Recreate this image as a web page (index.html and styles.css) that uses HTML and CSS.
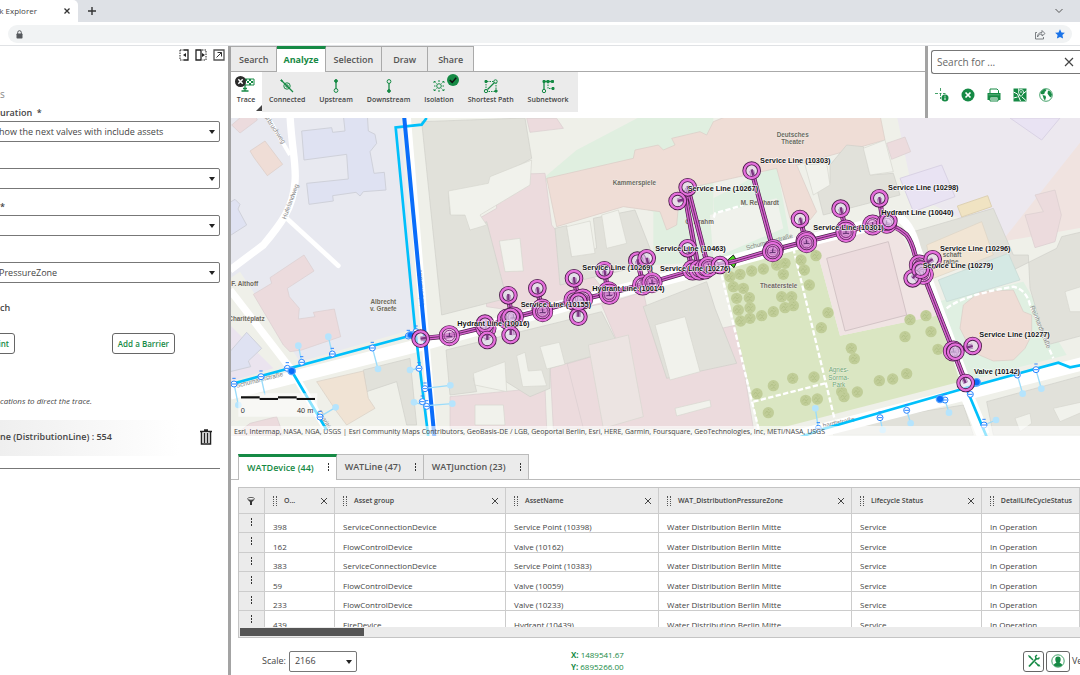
FILE: index.html
```html
<!DOCTYPE html>
<html lang="en">

<head>
    <meta charset="UTF-8">
    <meta name="viewport" content="width=device-width, initial-scale=1.0">
    <title>Network Explorer</title>
    <link rel="stylesheet" href="styles.css">
</head>

<body>
    <!-- Browser chrome -->
    <div class="tab-strip">
        <div class="browser-tab">
            <span>rk Explorer</span>
            <button class="plain" aria-label="Close tab"><svg width="8" height="8" viewBox="0 0 8 8"><path d="M1.500 1.500l5 5M6.500 1.500l-5 5" stroke="#333" stroke-width="1.300"/></svg></button>
        </div>
        <button class="plain new-tab" aria-label="New tab"><svg width="10" height="10" viewBox="0 0 10 10"><path d="M5 1v8M1 5h8" stroke="#333" stroke-width="1.400"/></svg></button>
        <button class="plain tab-list" aria-label="Tab list"><svg width="10" height="6" viewBox="0 0 10 6"><path d="M1.500 1l3.500 3.500L8.500 1" fill="none" stroke="#555"/></svg></button>
    </div>
    <div class="address-row">
        <div class="address-bar">
            <svg width="7" height="9" viewBox="0 0 7 9"><path d="M1.700 4V2.500a1.800 1.800 0 0 1 3.600 0V4" fill="none" stroke="#55585c"/><rect x=".5" y="3.500" width="6" height="5" rx=".7" fill="#55585c"/></svg>
            <svg class="share" width="12" height="11" viewBox="0 0 12 11"><path d="M3 3.500H1.500v6.500h8V8M3.500 8c0-3 1.500-4.500 4.500-4.500V1.500L11 4.500 8 7V5C6 5 4.500 6 3.500 8z" fill="none" stroke="#5f6368" stroke-width=".8"/></svg>
            <svg width="10" height="10" viewBox="0 0 10 10"><path d="M5 .3l1.500 3.100 3.400.4-2.500 2.300.7 3.500L5 7.900 1.900 9.600l.7-3.500L.1 3.800l3.400-.4z" fill="#1a73e8"/></svg>
        </div>
    </div>

    <div class="app">
        <aside class="trace-panel">
            <div class="panel-tools">
                <button class="plain" aria-label="Dock left"><svg width="10" height="12" viewBox="0 0 10 12"><path d="M1 1v10M1 1h5M1 11h5" stroke="#222" stroke-dasharray="1.500 1" fill="none"/><path d="M5 1h4v10H5" fill="none" stroke="#222" stroke-width="1.300"/><path d="M7 4v4L4 6z" fill="#222"/></svg></button>
                <button class="plain" aria-label="Dock right"><svg width="12" height="12" viewBox="0 0 12 12"><path d="M1 1h5v10H1z" fill="none" stroke="#222" stroke-width="1.300"/><path d="M7 1h4v10H7" fill="none" stroke="#222" stroke-dasharray="1.500 1"/><path d="M7 4v4l3-2z" fill="#222"/></svg></button>
                <button class="plain" aria-label="Undock"><svg width="12" height="12" viewBox="0 0 12 12"><path d="M1 1h10v10H1z" fill="none" stroke="#555" stroke-width="1.300"/><path d="M3.500 8.500L8.500 3.500M4.500 3.500h4v4" fill="none" stroke="#333"/></svg></button>
            </div>
            <div class="trace-form">
                <h2>s</h2>
                <label for="configuration">uration &nbsp;*</label>
                <div class="select">
                    <select id="configuration"><option>how the next valves with include assets</option></select>
                </div>
                <label for="domain">&nbsp;</label>
                <div class="select">
                    <select id="domain"><option></option></select>
                </div>
                <label for="tier">*</label>
                <div class="select">
                    <select id="tier"><option></option></select>
                </div>
                <label for="zone">&nbsp;</label>
                <div class="select">
                    <select id="zone"><option>PressureZone</option></select>
                </div>
                <h3>ch</h3>
                <div class="point-buttons">
                    <button class="btn">int</button>
                    <button class="btn">Add a Barrier</button>
                </div>
                <p class="hint">cations to direct the trace.</p>
                <div class="start-point">
                    <strong>ne (DistributionLine) : 554</strong>
                    <button class="plain" aria-label="Delete"><svg width="12" height="16" viewBox="0 0 12 16"><path d="M0 2.500h12M4 1h4" stroke="#222" stroke-width="1.600"/><path d="M1.500 3v12h9V3M4.500 4v10M7.500 4v10" fill="none" stroke="#222" stroke-width="1.500"/></svg></button>
                </div>
            </div>
        </aside>

        <main>
            <div class="top-area">
                <div class="ribbon">
                    <nav class="ribbon-tabs">
                        <a href="#search">Search</a>
                        <a href="#analyze" class="active">Analyze</a>
                        <a href="#selection">Selection</a>
                        <a href="#draw">Draw</a>
                        <a href="#share">Share</a>
                    </nav>
                    <div class="tools">
                        <button class="tool current">
                            <svg width="22" height="16" viewBox="0 0 22 16"><path d="M10 5v10M6.500 15h7M8 12.500h4" stroke="#168a45" stroke-width="1.300"/><path d="M10 3h9v6h-9z" fill="#fff" stroke="#168a45"/><path d="M10 3h2v2h-2zM14 3h2v2h-2zM12 5h2v2h-2zM16 5h2v2h-2zM14 7h2v2h-2z" fill="#168a45"/><circle cx="5.500" cy="5.500" r="5.500" fill="#2b2b2b"/><path d="M3.300 3.300l4.400 4.400M7.700 3.300L3.300 7.700" stroke="#fff" stroke-width="1.500"/></svg>
                            Trace
                        </button>
                        <button class="tool">
                            <svg width="16" height="16" viewBox="0 0 16 16" fill="none" stroke="#168a45"><path d="M2 2l12 12" stroke-width="1.200"/><circle cx="8" cy="8" r="3.200"/><circle cx="8" cy="8" r="1.200"/><circle cx="2.500" cy="2.500" r=".7"/></svg>
                            Connected
                        </button>
                        <button class="tool">
                            <svg width="16" height="16" viewBox="0 0 16 16" fill="none" stroke="#168a45"><path d="M8 3v8" stroke-width="1.300"/><circle cx="8" cy="3" r="1.400" fill="#168a45"/><circle cx="8" cy="12.500" r="1.900"/></svg>
                            Upstream
                        </button>
                        <button class="tool">
                            <svg width="16" height="16" viewBox="0 0 16 16" fill="none" stroke="#168a45"><path d="M8 5v8" stroke-width="1.300"/><circle cx="8" cy="13" r="1.400" fill="#168a45"/><circle cx="8" cy="3.500" r="1.900"/></svg>
                            Downstream
                        </button>
                        <button class="tool">
                            <svg width="16" height="16" viewBox="0 0 16 16" fill="none" stroke="#168a45"><circle cx="8" cy="8" r="2.300"/><path d="M8 2v2M8 12v2M3 8h1.500M11.500 8H13M3 5V3.500h1.500M11.500 3.500H13V5M3 11v1.500h1.500M11.500 12.500H13V11M4.500 4.500l1 1M11.500 4.500l-1 1M4.500 11.500l1-1M11.500 11.500l-1-1"/></svg>
                            Isolation
                            <svg class="done" width="12" height="12" viewBox="0 0 12 12"><circle cx="6" cy="6" r="6" fill="#168a45"/><path d="M2.800 6l2.400 2.400 4-4.600" fill="none" stroke="#111" stroke-width="1.500"/></svg>
                        </button>
                        <button class="tool">
                            <svg width="16" height="16" viewBox="0 0 16 16" fill="none" stroke="#168a45"><path d="M3 12.500v-9h8.500M13 4.500v9H5" stroke-dasharray="1.500 1"/><path d="M4.500 11.500l7-7" stroke-width="1.200"/><circle cx="3" cy="13" r="1.700"/><circle cx="12.500" cy="3.500" r="1.700"/><path d="M2 2.500h2v2H2zM12 12h2v2h-2z" fill="#168a45"/></svg>
                            Shortest Path
                        </button>
                        <button class="tool">
                            <svg width="16" height="16" viewBox="0 0 16 16" fill="none" stroke="#168a45"><path d="M4 11.500V3.500h8" stroke-width="1.300"/><path d="M8 4v6.500h5" stroke-dasharray="1.500 1"/><circle cx="4" cy="13" r="1.700"/><path d="M3 2.500h2v2H3zM11.500 2.500h2v2h-2zM12 9.500h2v2h-2zM7 2.500h2v2H7z" fill="#168a45"/></svg>
                            Subnetwork
                        </button>
                    </div>
                </div>
                <div class="search-panel">
                    <div class="search-box">
                        <input type="text" aria-label="Search" placeholder="Search for ...">
                        <button class="plain" aria-label="Clear search"><svg width="10" height="10" viewBox="0 0 10 10"><path d="M1 1l8 8M9 1L1 9" stroke="#444" stroke-width="1.200"/></svg></button>
                    </div>
                    <div class="quick-tools">
                        <button class="plain" aria-label="Identify"><svg width="14" height="14" viewBox="0 0 14 14"><path d="M5.500 0v3M5.500 5v3M5.500 9v2M0 5.500h3M4.500 5.500h2M8 5.500h2.500" stroke="#168a45" stroke-width=".8"/><circle cx="10" cy="10" r="3.500" fill="#168a45"/><path d="M10 9.500v2.500M10 7.700v1" stroke="#fff"/></svg></button>
                        <button class="plain" aria-label="Clear"><svg width="14" height="14" viewBox="0 0 14 14"><circle cx="7" cy="7" r="6.500" fill="#168a45"/><path d="M4.500 4.500l5 5M9.500 4.500l-5 5" stroke="#fff" stroke-width="1.700"/></svg></button>
                        <button class="plain" aria-label="Print"><svg width="14" height="14" viewBox="0 0 14 14"><path d="M3 5V1h7l1.500 1.500V5" fill="#fff" stroke="#168a45"/><path d="M.5 5h13v7h-13z" fill="#168a45"/><path d="M3 9h8v4H3z" fill="#fff" stroke="#168a45"/><path d="M4 11h6M2 7h10" stroke="#168a45"/><path d="M1.500 6.800h11" stroke="#8fc9a6" stroke-width=".6"/></svg></button>
                        <button class="plain" aria-label="Map export"><svg width="14" height="14" viewBox="0 0 14 14"><path d="M.5.500h13v13H.5z" fill="#168a45"/><path d="M.5 4l4 2 3 7M.5 10l4-1M5.500.5L7 8l6.500-5M9 9l4.500 4" fill="none" stroke="#fff"/><path d="M8 1.500a2.500 2.500 0 0 1 2.500 2.500C10.500 6 8 8.500 8 8.500S5.500 6 5.500 4A2.500 2.500 0 0 1 8 1.500z" fill="#168a45" stroke="#fff" stroke-width=".8"/><circle cx="8" cy="4" r=".8" fill="#fff"/></svg></button>
                        <button class="plain" aria-label="Basemap"><svg width="14" height="14" viewBox="0 0 14 14"><circle cx="7" cy="7" r="6.300" fill="#fff" stroke="#168a45" stroke-width=".8"/><path d="M1.500 4L5 1l2.500.5L7 3 5.500 4l.5 1L4 6.500 2 6zM3.500 7l3 .8.5 1.700L6 12.500 4.800 11zM9 2.500l2.500 1L13 6.500l-1 3L10.500 8.500 9.500 7 8.500 5.500z" fill="#168a45"/></svg></button>
                    </div>
                </div>
            </div>

            <div class="map">
                <svg class="map-canvas" viewBox="3 9 2547 954" preserveAspectRatio="xMinYMin slice">
                    <defs>
                        <g id="node">
                            <circle r="22" fill="#e3dcf2" fill-opacity=".6" stroke="#4b1b4a" stroke-width="12"/>
                            <circle r="22" fill="none" stroke="#e56fdc" stroke-width="7"/>
                        </g>
                        <g id="double">
                            <circle r="26" fill="#e29be0" fill-opacity=".6" stroke="#4b1b4a" stroke-width="11"/>
                            <circle r="26" fill="none" stroke="#e56fdc" stroke-width="7"/>
                            <circle r="16" fill="none" stroke="#8a3388" stroke-width="3"/>
                            <path d="M-9 3h18M0 3v-12" stroke="#5a2a6a" stroke-width="3"/>
                        </g>
                        <g id="valve">
                            <circle r="9" fill="#fff" stroke="#2c86ff" stroke-width="3"/>
                            <path d="M-7 0H7M-5 -17H5" stroke="#2c86ff" stroke-width="3"/>
                        </g>
                        <g id="tree">
                            <circle r="17" fill="#c0cd98"/>
                            <path d="M-10 3l6-8 5 7 7-6M-6 9l8-4 5 5M-2 -11l5 3" fill="none" stroke="#aebc82" stroke-width="2"/>
                        </g>
                        <circle id="hydrant" r="10" fill="#b5e4fd"/>
                    </defs>

                    <!-- ground -->
                    <path fill="#eff0e9" d="M0 0h2600v1000H0z"/>
                    <path fill="#e8e9f0" d="M0 0H510L560 640 210 740 30 470 0 490z"/>
                    <path fill="#ebe4ef" d="M0 630L130 760 0 800z"/>
                    <path fill="#ece8ef" d="M1000 0H2600V60L2330 380 2050 240 2000 0z"/>
                    <path fill="#f0e3e0" d="M2600 20L2315 380 2600 330z"/>
                    <path fill="#e0efe0" d="M940 190L1040 105 1240 0H1450V440L1270 450 1270 290 950 200z"/>
                    <path fill="#dff0e1" d="M1450 250L1640 150 1680 370 1460 440z"/>
                    <path fill="#f0f2ec" d="M1440 300L1640 250 1660 340 1450 430z"/>
                    <path fill="#e0f0e2" d="M2120 560L2380 500 2510 720 2200 800z"/>

                    <!-- buildings -->
                    <g fill="#dfe2f2" stroke="#cfd1da" stroke-width="3">
                        <path d="M215 48L305 38 308 52 345 48 340 0H412L415 48 435 58 440 85 420 110 432 175 463 172 468 225 400 230 390 243 378 232 308 242 310 258 237 268 230 205 355 192 350 118 222 135z"/>
                        <path d="M0 262L15 253 30 268 24 282 50 330 0 362zM0 710L50 652 95 700 55 738 62 755 0 770z"/>
                    </g>
                    <g fill="#ecdbdd" stroke="#d9cdce" stroke-width="2">
                        <path d="M5 30L40 0H75L82 15 30 54zM70 538L125 505 120 488 222 420 252 468 172 520 178 545 208 580 205 612 255 605 250 592 313 582 332 665 215 705 180 710 160 690z"/>
                        <path d="M890 10H980L1000 40 900 52z"/>
                        <path d="M748 310L800 280 795 180 945 175 965 330 1150 560 940 600 770 575z"/>
                        <path d="M1115 570L1240 530 1260 620 1290 680 1520 630 1570 940H1010L1000 750 1170 700z"/>
                        <path d="M660 845L945 818 950 940H660zM960 750L1010 740 1060 940H970zM2 970L60 925 140 905 160 960z"/>
                        <path d="M1970 85L2025 66 2042 110 1985 133zM2385 300L2440 290 2415 240 2475 225 2494 300 2475 380 2415 398z"/>
                    </g>
                    <g fill="#efddd6" stroke="#dacbc5" stroke-width="2">
                        <path d="M950 190L1210 130 1215 105 1285 90 1300 105 1335 90 1325 70 1410 50 1430 60 1450 20 1500 0H1950L1965 75 1700 150 1760 290 1740 315 1680 310 1640 160 1350 225 1340 330 1310 345 1290 290 1180 275 980 335z"/>
                        <path d="M2200 570L2250 530 2350 525 2380 590 2405 600 2405 660 2385 700 2350 735 2290 738 2225 710 2190 640z"/>
                        <path d="M60 108L105 78 158 148 112 182 72 128z"/>
                    </g>
                    <g fill="#e1e1da" stroke="#cfcfc8" stroke-width="2">
                        <path d="M575 20L885 9 905 130 780 200 755 218 655 232 660 298 710 300 720 345 770 320 830 550 635 600z"/>
                        <path d="M975 340L1010 332 1025 425 1100 400 1090 310 1215 285 1260 400 1250 450 990 510z"/>
                        <path d="M648 705L1115 590 1170 700 1010 745 960 760 960 820 900 845 780 770 730 790 740 830 660 840z"/>
                        <path d="M1240 575L1430 500 1455 580 1520 745 1310 790z"/>
                        <path d="M400 765L540 730 560 930H530L500 800 410 830z"/>
                        <path d="M1760 220L1800 205 1800 150 1850 90 1900 95 1920 180 1990 175 2010 240 1780 300z"/>
                        <path d="M2050 350L2290 280 2350 420 2395 420 2400 520 2450 690 2600 650V340L2495 365 2480 400 2320 480 2060 440z"/>
                        <path d="M1820 930L2200 870 2230 960H1810zM2270 860L2600 770V960H2290z"/>
                    </g>
                    <g fill="#f1f2ec" stroke="#d6d6cf" stroke-width="2">
                        <path d="M655 228L775 205 780 185 905 135 900 210 750 300 770 330 720 345 705 300 662 300z"/>
                        <path d="M808 378L870 370 880 468 825 470zM1010 335L1080 318 1095 415 1025 425zM1115 300L1165 285 1190 385 1130 400z"/>
                        <path d="M1275 630L1365 605 1410 770 1320 795zM730 775L825 740 830 830 735 810zM860 722L885 712 895 768 935 765 950 812 878 815zM930 695L988 682 1005 748 950 762zM735 870H820L825 930H735zM1335 880L1440 855 1443 875 1340 903z"/>
                        <path d="M1075 690L1195 660 1240 905 1120 940z" fill="#ece4e2"/>
                        <path d="M2505 530L2600 500V590L2520 590zM2470 880L2560 860V890L2490 920zM2355 910L2400 895 2405 925 2370 950z"/>
                        <path d="M1725 150L1790 145 1800 210 1750 240zM1900 100L1965 75 1990 170 1920 180z"/>
                    </g>
                    <path fill="#f0e3d4" stroke="#d8cfc4" stroke-width="2" d="M260 800L400 768 415 850 435 880 350 930 320 890z"/>
                    <path fill="#e9e3f3" stroke="#d9d2e4" stroke-width="3" d="M2010 190L2135 150 2175 245 2050 290zM2340 9L2435 75 2490 9z"/>
                    <path fill="#f0e3c2" stroke="#ddd1b3" stroke-width="3" d="M2182 273L2273 242 2285 275 2195 306z"/>
                    <path fill="#f1e5d4" stroke="#ddd3c4" stroke-width="2" d="M2090 390L2255 320 2290 420 2110 490z"/>
                    <path fill="#d5e9e4" stroke="#c6d8d3" stroke-width="2" d="M2125 495L2335 415 2370 495 2150 560z"/>

                    <!-- park -->
                    <path fill="#dae6c2" d="M1475 460L1755 385 1830 662 2125 600 2190 800 1590 955z"/>
                    <path fill="#f0e4e3" d="M1755 385L2000 325 2130 600 1830 662z"/>
                    <path fill="#ecdbdd" stroke="#d3c4c6" stroke-width="3" d="M1790 430L1975 380 2030 600 1845 648z"/>

                    <!-- streets -->
                    <g fill="none" stroke="#fff">
                        <path stroke-width="22" d="M180 0C185 100 200 150 195 200 190 280 150 330 100 390L0 465M0 525L185 765 300 960"/>
                        <path stroke-width="14" d="M165 305L325 452" stroke-linecap="round"/>
                        <path stroke-width="12" d="M110 0L180 120"/>
                        <path stroke-width="38" d="M0 835L600 682 1010 570 1370 475 1740 375 2000 310"/>
                        <path stroke-width="26" d="M2000 305Q2040 320 2060 400L2220 830"/>
                        <path stroke-width="40" d="M1600 990L2210 835 2600 735M2210 840L2260 960"/>
                        <path stroke-width="24" d="M530 0L610 960"/>
                        <path stroke-width="7" stroke-dasharray="16 7" d="M1475 480L1590 960M1690 400L1818 930M1570 860L1785 805M1445 330L1455 295 1540 270M2150 580Q2200 540 2350 515 2390 525 2400 570L2470 730"/>
                    </g>

                    <g id="trees"></g>

                    <!-- basemap labels -->
                    <g class="place">
                        <text x="4" y="512">F. Althoff</text>
                        <text x="-5" y="617">Charitéplatz</text>
                        <text x="460" y="567" text-anchor="middle">Albrecht</text>
                        <text x="460" y="589" text-anchor="middle">v. Graefe</text>
                        <text x="1148" y="210">Kammerspiele</text>
                        <text x="1688" y="65" text-anchor="middle">Deutsches</text>
                        <text x="1688" y="87" text-anchor="middle">Theater</text>
                        <text x="1532" y="270">M. Reinhardt</text>
                        <text x="1366" y="327">O. Brahm</text>
                        <text x="1590" y="518">Theaterstele</text>
                        <text x="2138" y="427">schaft</text>
                        <text x="2140" y="447">raine</text>
                        <g class="park-name">
                            <text x="1826" y="772" text-anchor="middle">Agnes-</text>
                            <text x="1826" y="794" text-anchor="middle">Sorma-</text>
                            <text x="1826" y="816" text-anchor="middle">Park</text>
                        </g>
                    </g>
                    <g class="street">
                        <text transform="translate(102 5) rotate(56)">orbruchweg</text>
                        <text transform="translate(168 314) rotate(-70)">Hufelandweg</text>
                        <text transform="translate(20 818) rotate(-14)">Schumannstraße</text>
                        <text transform="translate(1550 405) rotate(-15)">Schumannstraße</text>
                        <text transform="translate(582 572) rotate(-94)">Luisenstraße</text>
                        <text transform="translate(2400 575) rotate(68)">Reinhardtstraße</text>
                        <text transform="translate(1780 938) rotate(-12)">hardtstraße</text>
                        <text transform="translate(262 890) rotate(60)">Charité</text>
                    </g>

                    <!-- water network -->
                    <g fill="none" stroke="#00c0fb" stroke-width="8">
                        <path d="M590 9L575 29 497 37 555 640 596 975M0 808L540 662M185 768L290 945"/>
                        <path d="M1700 970L1780 942 2210 818 2485 743 2520 757 2600 742M2207 815L2272 970"/>
                    </g>
                    <path d="M522 0L614 975" stroke="#0a6dfa" stroke-width="12"/>
                    <g fill="none" stroke="#9adcfb" stroke-width="4">
                        <path d="M205 690L215 740M295 665L307 717M427 698L444 762M540 765L568 760M585 820L661 811M552 862L590 872 667 866M93 786L105 840M270 905L317 877M12 806L25 870"/>
                        <path d="M1756 880L1765 940M1950 908L1958 945M2030 885L2042 925M2145 855L2157 893M2362 780L2378 836M2418 765L2434 821M2263 930L2298 915"/>
                    </g>
                    <g id="hydrants"></g>
                    <g id="valves"></g>
                    <g fill="#0a6dfa" stroke="#58a5ff" stroke-width="4"><circle cx="185" cy="768" r="11"/><circle cx="542" cy="660" r="10"/><circle cx="2130" cy="852" r="11"/><circle cx="2240" cy="802" r="11"/></g>

                    <!-- trace result -->
                    <path d="M1490 438L1510 420 1521 438 1512 458z" fill="#4bdc1f" stroke="#222" stroke-width="3"/>
                    <g class="trace trace-casing"><path id="route" d="M572 671L658 662 765 636 840 610 938 585 1045 555 1135 535 1255 505 1410 460 1510 440 1630 405 1728 380 1848 350 1940 325Q1990 325 2030 360 2045 380 2055 420L2080 478 2170 708 2207 804M835 541L845 610 852 660M765 630L772 675M922 520L935 585M1032 490L1045 555V605M1123 466L1135 535M1222 437L1240 510 1270 502 1250 430M1373 400L1385 460M1373 217L1435 460M1343 258L1373 245M1362 225L1405 460M1565 167L1630 405M1710 312L1728 380M1832 281L1848 350M1948 250L1960 325M2108 433L2070 460 2048 490M2228 693L2170 708"/></g>
                    <use href="#route" class="trace trace-line"/>
                    <use href="#route" class="trace trace-core"/>
                    <g id="junctions"></g>
                    <g id="endpoints"></g>
                    <!-- service stubs inside the end nodes -->
                    <path class="stubs" d="M835 537V556M842 660V642M772 675V657M922 516L925 536M1032 486L1034 506M1045 605V588M1123 462L1126 482M1222 433L1226 452M1250 428L1254 446M1373 396L1377 415M1373 213L1378 233M1343 258L1362 253M1565 163L1570 182M1710 308L1715 327M1832 277L1836 296M1948 246L1951 266M2108 433L2090 443M2048 490L2060 476M2228 693L2210 698M2207 804L2200 788M572 671L590 669"/>
                    <g class="asset">
                        <text x="682" y="632">Hydrant Line (10016)</text>
                        <text x="872" y="577">Service Line (10155)</text>
                        <text x="1087" y="527">Hydrant Line (10014)</text>
                        <text x="1057" y="465">Service Line (10269)</text>
                        <text x="1276" y="409">Service Line (10463)</text>
                        <text x="1290" y="467">Service Line (10276)</text>
                        <text x="1373" y="228">Service Line (10267)</text>
                        <text x="1590" y="143">Service Line (10303)</text>
                        <text x="1750" y="346">Service Line (10301)</text>
                        <text x="1974" y="226">Service Line (10298)</text>
                        <text x="1954" y="299">Hydrant Line (10040)</text>
                        <text x="2130" y="409">Service Line (10296)</text>
                        <text x="2078" y="460">Service Line (10279)</text>
                        <text x="2248" y="666">Service Line (10277)</text>
                        <text x="2232" y="776">Valve (10142)</text>
                    </g>

                    <!-- scale bar -->
                    <path d="M25 835H262V905H25z" fill="#fff" fill-opacity=".55"/>
                    <path d="M33 850H255" stroke="#888" stroke-width="2"/>
                    <path d="M33 847H89M144 847H200M89 852H144M200 852H255" stroke="#111" stroke-width="6"/>
                    <g class="scale-text"><text x="32" y="893">0</text><text x="201" y="893">40 m</text></g>
                </svg>
                <div class="attribution">Esri, Intermap, NASA, NGA, USGS | Esri Community Maps Contributors, GeoBasis-DE / LGB, Geoportal Berlin, Esri, HERE, Garmin, Foursquare, GeoTechnologies, Inc, METI/NASA, USGS</div>
            </div>

            <section class="results">
                <nav class="result-tabs">
                    <a href="#device" class="active">WATDevice (44)<i class="dots"></i></a>
                    <a href="#line">WATLine (47)<i class="dots"></i></a>
                    <a href="#junction">WATJunction (23)<i class="dots"></i></a>
                </nav>
                <div class="grid">
                    <table>
                        <colgroup><col class="c-menu"><col class="c-id"><col class="c-group"><col class="c-name"><col class="c-zone"><col class="c-status"><col class="c-detail"></colgroup>
                        <thead>
                            <tr>
                                <th><svg width="8" height="8" viewBox="0 0 8 8"><ellipse cx="4" cy="1.800" rx="3.500" ry="1.300" fill="#fff" stroke="#333" stroke-width=".8"/><path d="M.6 2.500L3 5v3h2V5l2.400-2.500C6 3.500 2 3.500.6 2.500z" fill="#333"/></svg></th>
                                <th><div class="head"><i class="grip"></i>O...<button class="plain remove" aria-label="Remove column"></button></div></th>
                                <th><div class="head"><i class="grip"></i>Asset group<button class="plain remove" aria-label="Remove column"></button></div></th>
                                <th><div class="head"><i class="grip"></i>AssetName<button class="plain remove" aria-label="Remove column"></button></div></th>
                                <th><div class="head"><i class="grip"></i>WAT_DistributionPressureZone<button class="plain remove" aria-label="Remove column"></button></div></th>
                                <th><div class="head"><i class="grip"></i>Lifecycle Status<button class="plain remove" aria-label="Remove column"></button></div></th>
                                <th><div class="head"><i class="grip"></i>DetailLifeCycleStatus</div></th>
                            </tr>
                        </thead>
                        <tbody>
                            <tr><td><i class="dots"></i></td><td>398</td><td>ServiceConnectionDevice</td><td>Service Point (10398)</td><td>Water Distribution Berlin Mitte</td><td>Service</td><td>In Operation</td></tr>
                            <tr><td><i class="dots"></i></td><td>162</td><td>FlowControlDevice</td><td>Valve (10162)</td><td>Water Distribution Berlin Mitte</td><td>Service</td><td>In Operation</td></tr>
                            <tr><td><i class="dots"></i></td><td>383</td><td>ServiceConnectionDevice</td><td>Service Point (10383)</td><td>Water Distribution Berlin Mitte</td><td>Service</td><td>In Operation</td></tr>
                            <tr><td><i class="dots"></i></td><td>59</td><td>FlowControlDevice</td><td>Valve (10059)</td><td>Water Distribution Berlin Mitte</td><td>Service</td><td>In Operation</td></tr>
                            <tr><td><i class="dots"></i></td><td>233</td><td>FlowControlDevice</td><td>Valve (10233)</td><td>Water Distribution Berlin Mitte</td><td>Service</td><td>In Operation</td></tr>
                            <tr><td><i class="dots"></i></td><td>439</td><td>FireDevice</td><td>Hydrant (10439)</td><td>Water Distribution Berlin Mitte</td><td>Service</td><td>In Operation</td></tr>
                        </tbody>
                    </table>
                </div>
                <div class="scrollbar"><div class="thumb"></div></div>
            </section>

            <footer>
                <label for="scale">Scale:</label>
                <div class="select scale-select">
                    <select id="scale"><option>2166</option></select>
                </div>
                <div class="coords">
                    <div><b>X:</b> 1489541.67</div>
                    <div><b>Y:</b> 6895266.00</div>
                </div>
                <div class="footer-tools">
                    <button class="btn" aria-label="Tools"><svg width="14" height="14" viewBox="0 0 14 14"><path d="M3 3l3 3M8 8l4 4" stroke="#168a45" stroke-width="1.500"/><path d="M2 12.500l7.500-8" stroke="#168a45" stroke-width="1.800"/><path d="M12.500 3.500l-1.500 1.500-2-.5-.5-2L10 1" fill="none" stroke="#168a45" stroke-width="1.400"/><path d="M1 1l2.500 1 .5 2-2-.5zM10 12l2-2 1.500 2.500z" fill="#168a45"/></svg></button>
                    <button class="btn user" aria-label="User"><svg width="14" height="14" viewBox="0 0 14 14"><circle cx="7" cy="7" r="6.200" fill="#fff" stroke="#168a45" stroke-width=".8"/><path d="M7 2.500c2 0 2.700 1.300 2.700 3S8.500 9 8.500 9c2 .4 2.700 1.200 2.700 2.300-2 2-6.400 2-8.400 0C2.800 10.200 3.500 9.400 5.500 9c0 0-1.200-1.800-1.200-3.500s.7-3 2.700-3z" fill="#168a45"/></svg></button>
                    <span>Version</span>
                </div>
            </footer>
        </main>
    </div>
    <script>
        // Map symbols by layer, as [x, y] in map units
        const trees = [
            [1500, 485], [1530, 478], [1565, 468], [1600, 462], [1640, 450], [1665, 445], [1510, 515], [1520, 550],
            [1525, 585], [1532, 618], [1560, 610], [1595, 602], [1630, 590], [1665, 578], [1558, 548], [1560, 578],
            [1540, 520], [1655, 545], [1690, 572], [1685, 545], [1660, 478], [1713, 435], [1758, 422], [1723, 465],
            [1738, 510], [1794, 593], [1774, 638], [1864, 700], [1873, 731], [2040, 614], [2088, 602], [2025, 665],
            [2103, 650], [2124, 703], [1688, 790], [1752, 786], [1727, 856], [1762, 852], [1835, 830], [1842, 845],
            [1882, 831], [1948, 797], [1988, 792], [2030, 776], [1581, 836], [1630, 812], [1615, 893]
        ];
        const hydrants = [
            [205, 692], [295, 665], [444, 762], [540, 765], [661, 811], [552, 862], [667, 866], [317, 877], [25, 870],
            [1756, 880], [1958, 945], [2042, 925], [2157, 893], [2378, 836], [2434, 821], [2298, 915]
        ];
        const valves = [
            [12, 807], [93, 785], [215, 742], [307, 717], [427, 699], [172, 760], [270, 906], [535, 663], [558, 650],
            [567, 760], [585, 821], [577, 860], [590, 874], [1765, 940], [1950, 908], [2030, 886], [2145, 855],
            [2221, 838], [2362, 780], [2418, 764], [2262, 930]
        ];
        const junctions = [
            [658, 662], [768, 640], [832, 612], [850, 606], [936, 582], [938, 590], [1032, 555], [1058, 552],
            [1135, 530], [1138, 538], [1238, 510], [1266, 503], [1388, 465], [1408, 465], [1424, 462], [1435, 455],
            [1630, 404], [1628, 410], [1728, 378], [1730, 383], [1848, 345], [1848, 352], [1928, 330], [1970, 325],
            [2068, 450], [2080, 478], [2170, 708]
        ];
        const endpoints = [
            [572, 671], [765, 626], [772, 675], [835, 541], [842, 660], [842, 606], [922, 520], [1032, 490],
            [1045, 605], [1045, 560], [1123, 466], [1222, 437], [1250, 430], [1373, 400], [1470, 450], [1373, 217],
            [1343, 258], [1565, 167], [1710, 312], [1832, 281], [1948, 250], [1975, 318], [2108, 433], [2048, 490],
            [2072, 464], [2176, 710], [2228, 693], [2207, 804]
        ];

        function drawSymbols(layerId, symbol, points) {
            document.getElementById(layerId).innerHTML = points
                .map(([x, y]) => `<use href="#${symbol}" x="${x}" y="${y}"/>`)
                .join("");
        }

        drawSymbols("trees", "tree", trees);
        drawSymbols("hydrants", "hydrant", hydrants);
        drawSymbols("valves", "valve", valves);
        drawSymbols("junctions", "double", junctions);
        drawSymbols("endpoints", "node", endpoints);
    </script>
</body>

</html>
```
FILE: styles.css
```css
* {
    box-sizing: border-box;
}

body {
    display: flex;
    flex-direction: column;
    height: 100vh;
    margin: 0;
    overflow: hidden;
    background-color: #fff;
    color: #444;
    font-family: "Open Sans", "Noto Sans", sans-serif;
    font-size: 8px;
    line-height: 12px;
}

button,
input,
select {
    font: inherit;
    color: inherit;
}

svg {
    display: block;
    flex-shrink: 0;
}

.plain {
    display: flex;
    padding: 0;
    border: none;
    background: none;
    cursor: pointer;
}

/* browser chrome */
.tab-strip {
    display: flex;
    align-items: center;
    height: 22px;
    background-color: #dee1e6;
}

.browser-tab {
    display: flex;
    align-items: center;
    justify-content: space-between;
    width: 78px;
    height: 22px;
    padding-right: 7px;
    border-radius: 0 5px 0 0;
    background-color: #fff;
    white-space: nowrap;
}

.browser-tab span {
    margin-left: -4px;
}

.new-tab {
    margin-left: 9px;
}

.tab-list {
    margin-left: auto;
    margin-right: 16px;
}

.address-row {
    height: 24px;
    padding: 3px 8px;
    border-bottom: 1px solid #e0e2e5;
}

.address-bar {
    display: flex;
    align-items: center;
    height: 18px;
    padding: 0 7px 0 8px;
    border-radius: 9px;
    background-color: #f1f3f4;
}

.address-bar .share {
    margin-left: auto;
    margin-right: 9px;
}

.app {
    display: flex;
    flex: 1;
    min-height: 0;
}

/* trace panel */
.trace-panel {
    width: 231px;
    flex-shrink: 0;
    padding-right: 8px;
    border-right: 3px solid #a3a3a3;
    overflow: hidden;
}

.panel-tools {
    display: flex;
    justify-content: flex-end;
    gap: 6px;
    padding: 3px 0;
    margin-right: -5px;
}

.trace-form {
    margin-left: -10px;
    font-size: 9px;
}

.trace-form h2,
.trace-form h3,
.trace-form label,
.hint {
    display: block;
    margin: 0;
    padding-left: 10px;
    line-height: 14px;
}

.trace-form h2 {
    margin: 23px 0 4px;
    color: #888;
    font-size: 10px;
    font-weight: normal;
}

.trace-form label {
    height: 16px;
    padding-top: 1px;
    font-weight: 600;
}

.select {
    position: relative;
    height: 21px;
}

.trace-form .select {
    margin-bottom: 10px;
}

.select select {
    width: 100%;
    height: 100%;
    padding: 0 16px 0 8px;
    border: 1px solid #777;
    border-radius: 2px;
    background-color: #fff;
    appearance: none;
}

.select::after {
    content: "";
    position: absolute;
    top: 9px;
    right: 5px;
    border: 3px solid transparent;
    border-top: 4px solid #222;
    border-bottom: none;
    pointer-events: none;
}

.trace-form h3 {
    margin: 18px 0;
    font-size: 9px;
    font-weight: 600;
}

.btn {
    height: 21px;
    padding: 0 5px;
    border: 1px solid #666;
    border-radius: 3px;
    background-color: #fff;
    color: #168a45;
    font-weight: 600;
    cursor: pointer;
}

.point-buttons {
    display: flex;
    justify-content: space-between;
    padding-right: 45px;
}

.point-buttons .btn {
    min-width: 25px;
    font-size: 8px;
    text-align: right;
}

.hint {
    margin-top: 40px;
    font-size: 8px;
    font-style: italic;
}

.start-point {
    display: flex;
    align-items: center;
    justify-content: space-between;
    height: 61px;
    padding: 0 8px 2px 10px;
    border-bottom: 1px solid #777;
    background: linear-gradient(to right, #eee, #fff 190px) no-repeat 0 12px / 100% 36px;
}

.start-point strong {
    font-weight: 600;
}

main {
    display: flex;
    flex: 1;
    flex-direction: column;
    min-width: 0;
}

/* ribbon */
.top-area {
    display: flex;
    height: 72px;
}

.ribbon {
    flex: 1;
}

.ribbon-tabs {
    display: flex;
    height: 26px;
    border-bottom: 1px solid #aaa;
}

.ribbon-tabs a {
    min-width: 46px;
    height: 25px;
    padding: 4px 8px 0;
    border: 1px solid #aaa;
    border-width: 1px 1px 0 0;
    background-color: #ebebeb;
    color: #555;
    font-size: 9px;
    font-weight: 600;
    line-height: 18px;
    text-align: center;
    text-decoration: none;
}

.ribbon-tabs a.active,
.result-tabs a.active {
    border-top: 3px solid #168a45;
    background-color: #fff;
    color: #168a45;
}

.ribbon-tabs a.active {
    height: 26px;
    padding: 2px 6px 0;
    font-weight: bold;
}

.tools {
    display: inline-flex;
    height: 40px;
    padding-right: 2px;
    background-color: #ebebeb;
}

.tool {
    position: relative;
    display: flex;
    flex-direction: column;
    align-items: center;
    gap: 1px;
    padding: 6px 7px 0;
    border: none;
    background: none;
    font-size: 7px;
    font-weight: 600;
    line-height: 10px;
}

.tool.current {
    padding: 4px 5px 0 4px;
    gap: 3px;
    background-color: #fff;
}

.tool.current::after {
    content: "";
    position: absolute;
    right: 0;
    bottom: 1px;
    border: 3px solid #444;
    border-top-color: transparent;
    border-left-color: transparent;
}

.done {
    position: absolute;
    top: 2px;
    right: 2px;
}

/* search */
.search-panel {
    width: 155px;
    padding: 4px 0 0 3px;
    border-left: 3px solid #a3a3a3;
}

.search-box {
    display: flex;
    align-items: center;
    height: 24px;
    padding: 0 6px 0 5px;
    border: 1px solid #777;
    border-right: none;
    border-radius: 3px 0 0 3px;
    font-size: 10px;
}

.search-box input {
    flex: 1;
    min-width: 0;
    padding: 0;
    border: none;
    outline: none;
}

.search-box input::placeholder {
    color: #666;
}

.quick-tools {
    display: flex;
    gap: 12px;
    padding: 14px 4px 0;
}

/* map */
.map {
    position: relative;
    height: 318px;
    overflow: hidden;
}

.map-canvas {
    width: 100%;
    height: 100%;
}

.map text {
    font-family: "Liberation Sans", Arial, sans-serif;
}

.place {
    fill: #6b675c;
    font-size: 19px;
    stroke: #f4f4ef;
    stroke-width: 2px;
    paint-order: stroke;
}

.place text {
    font-weight: bold;
}

.place .park-name {
    fill: #6aa568;
}

.park-name text {
    font-weight: normal;
}

.street {
    fill: #858585;
    font-size: 19px;
}

.asset {
    fill: #111;
    font-size: 22px;
    stroke: #fff;
    stroke-width: 3px;
    paint-order: stroke;
}

.asset text {
    font-weight: bold;
}

.scale-text {
    fill: #333;
    font-size: 22px;
}

.trace {
    fill: none;
    stroke-linejoin: round;
}

.trace-casing {
    stroke: #4b1b4a;
    stroke-width: 15px;
}

.trace-line {
    stroke: #d565ce;
    stroke-width: 11px;
}

.trace-core {
    stroke: #6a2768;
    stroke-width: 3px;
}

.stubs {
    fill: none;
    stroke: #7a3580;
    stroke-width: 7px;
}

.attribution {
    position: absolute;
    right: 0;
    bottom: 0;
    left: 0;
    height: 10px;
    padding-left: 3px;
    background-color: rgba(255, 255, 255, 0.6);
    font-size: 7px;
    line-height: 11px;
    white-space: nowrap;
}

/* results */
.results {
    padding-top: 18px;
}

.result-tabs {
    display: flex;
    height: 26px;
    padding-left: 7px;
    border-bottom: 1px solid #bbb;
}

.result-tabs a {
    display: flex;
    align-items: center;
    gap: 14px;
    height: 25px;
    padding: 0 7px 0 8px;
    border: 1px solid #bbb;
    border-width: 1px 1px 0 0;
    background-color: #ebebeb;
    color: #555;
    font-size: 9px;
    font-weight: 600;
    text-decoration: none;
}

.result-tabs a.active {
    height: 26px;
    padding-bottom: 2px;
    border-left-width: 1px;
}

.dots {
    display: inline-block;
    width: 1px;
    height: 9px;
    background: repeating-linear-gradient(#333 0 2px, transparent 2px 3px);
}

.grid {
    height: 140px;
    margin: 7px 0 0 7px;
    border: 1px solid #c4c4c4;
    border-width: 1px 0 0 1px;
    overflow: hidden;
}

table {
    width: 100%;
    border-collapse: separate;
    border-spacing: 0;
    table-layout: fixed;
}

.c-menu { width: 26px; }
.c-id { width: 70px; }
.c-group { width: 171px; }
.c-name { width: 153px; }
.c-zone { width: 193px; }
.c-status { width: 130px; }

th,
td {
    padding: 0 0 0 8px;
    border: 1px solid #ccc;
    border-width: 0 1px 1px 0;
    text-align: left;
    white-space: nowrap;
}

th {
    height: 26px;
    background-color: #ebebeb;
    font-size: 7px;
    font-weight: 600;
}

.head {
    display: flex;
    align-items: center;
    padding-right: 7px;
}

.remove {
    width: 6px;
    height: 6px;
    margin-left: auto;
    background:
        linear-gradient(45deg, transparent 44%, #444 44% 56%, transparent 56%),
        linear-gradient(-45deg, transparent 44%, #444 44% 56%, transparent 56%);
}

.grip {
    width: 4px;
    height: 10px;
    margin-right: 7px;
    border: solid #555;
    border-width: 0 1px;
    border-style: dotted;
}

td {
    height: 19px;
    padding-top: 7px;
    line-height: 11px;
}

tr:nth-child(even) td {
    height: 20px;
}

td:first-child {
    padding: 0 0 0 12px;
    background-color: #ebebeb;
}

.scrollbar {
    height: 11px;
    margin-left: 7px;
    padding: 1px;
    border: 1px solid #c4c4c4;
    border-width: 0 0 1px 1px;
    background-color: #ebebeb;
}

.thumb {
    width: 124px;
    height: 8px;
    background-color: #555;
}

footer {
    display: flex;
    align-items: center;
    padding: 11px 0 0 31px;
    font-size: 9px;
}

.scale-select {
    width: 68px;
    margin-left: 3px;
}

.scale-select select {
    padding-left: 5px;
}

.coords {
    margin-left: 214px;
    color: #168a45;
    font-size: 8px;
}

.footer-tools {
    display: flex;
    align-items: center;
    gap: 2px;
    width: 57px;
    margin-left: auto;
    overflow: hidden;
}

.footer-tools .btn {
    flex-shrink: 0;
    width: 21px;
    padding: 0 3px;
}

.footer-tools .user {
    width: 24px;
    padding: 0 4px;
}
```
